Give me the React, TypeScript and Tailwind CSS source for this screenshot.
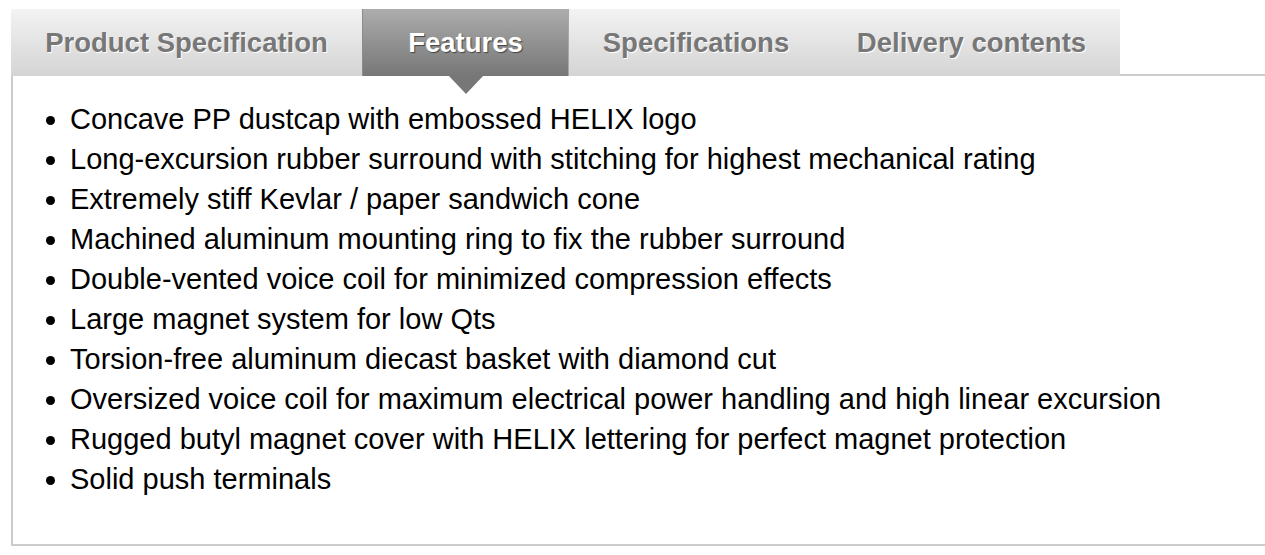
import React from "react";

const items = [
  "Concave PP dustcap with embossed HELIX logo",
  "Long-excursion rubber surround with stitching for highest mechanical rating",
  "Extremely stiff Kevlar / paper sandwich cone",
  "Machined aluminum mounting ring to fix the rubber surround",
  "Double-vented voice coil for minimized compression effects",
  "Large magnet system for low Qts",
  "Torsion-free aluminum diecast basket with diamond cut",
  "Oversized voice coil for maximum electrical power handling and high linear excursion",
  "Rugged butyl magnet cover with HELIX lettering for perfect magnet protection",
  "Solid push terminals",
];

const light =
  "flex items-center justify-center h-full bg-gradient-to-b from-[#f3f3f3] to-[#d4d4d4] text-[#777777] [text-shadow:1px_1px_0_#ffffff]";

export default function App() {
  return (
    <div className="w-full h-[555px] overflow-hidden bg-white font-['Liberation_Sans',Arial,sans-serif]">
      <div className="pl-[11px] pt-[9px] w-[1300px]">
        <div className="relative z-10 flex h-[67px] -mb-[2px] text-[27.5px] font-bold leading-none">
          <div className={light + " w-[351px]"}>Product Specification</div>
          <div className="relative flex items-center justify-center h-full w-[207px] bg-gradient-to-b from-[#adadad] to-[#777777] border-l border-[#8c8c8c] border-r border-r-[#a8a8a8] text-white [text-shadow:1px_1px_1px_#444444]">
            Features
            <div className="absolute left-1/2 top-full -translate-x-1/2 w-0 h-0 border-l-[17px] border-r-[17px] border-t-[18px] border-l-transparent border-r-transparent border-t-[#777777]" />
          </div>
          <div className={light + " w-[254px]"}>Specifications</div>
          <div className={light + " w-[297px]"}>Delivery contents</div>
        </div>
        <div className="border-2 border-[#cccccc] h-[472px] pt-[23px]">
          <ul className="list-disc pl-[57px] text-[29px] leading-[40px] text-black">
            {items.map((t) => (
              <li key={t}>{t}</li>
            ))}
          </ul>
        </div>
      </div>
    </div>
  );
}
